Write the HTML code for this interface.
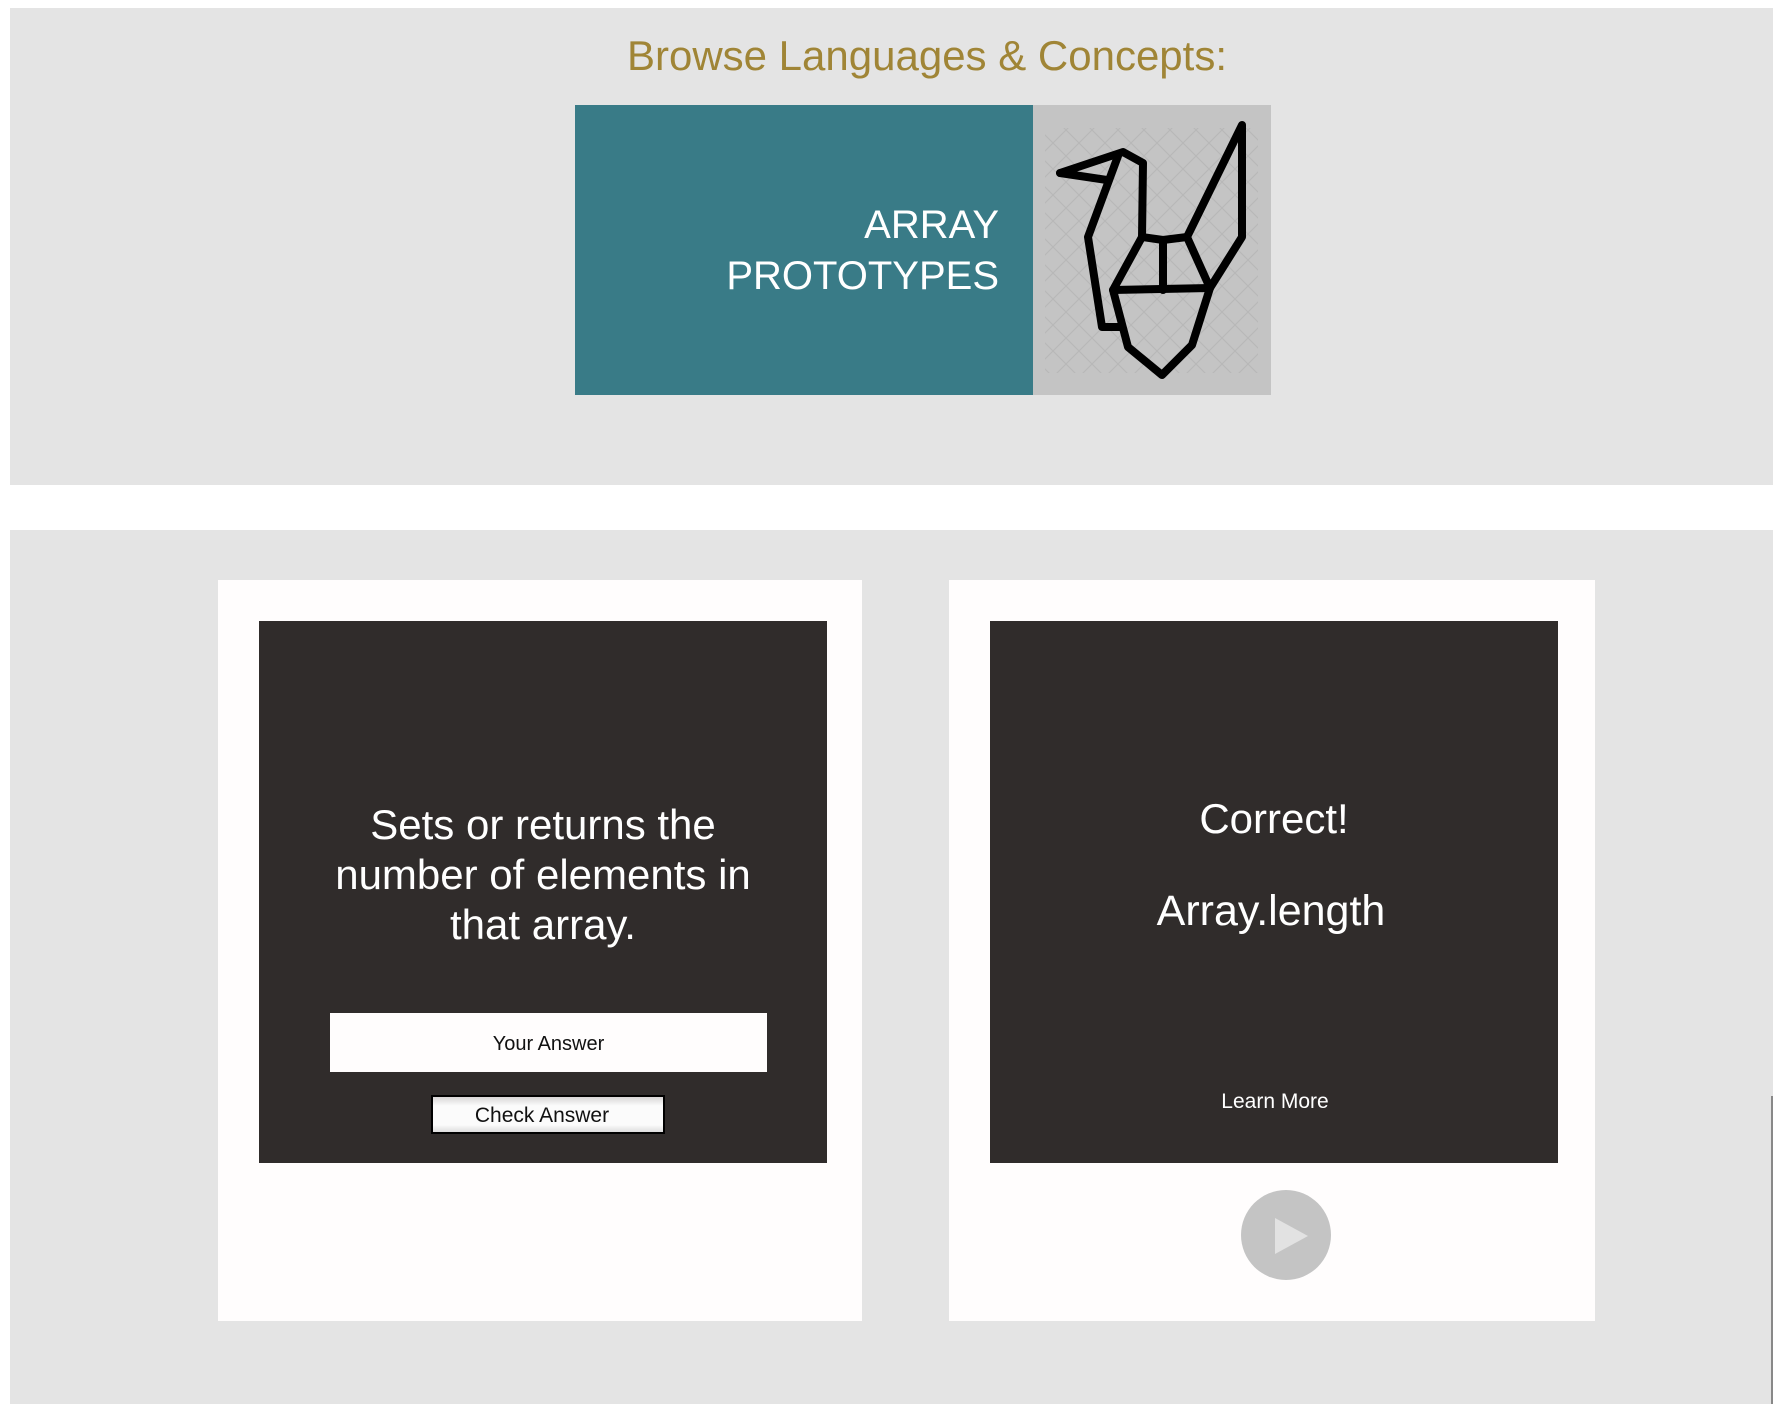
<!DOCTYPE html>
<html><head><style>
*{margin:0;padding:0;box-sizing:border-box}
body{width:1786px;height:1416px;background:#fff;position:relative;overflow:hidden;font-family:"Liberation Sans",sans-serif}
.a{position:absolute}
.t{position:absolute;white-space:nowrap;text-align:center}
</style></head><body>
<div class="a" style="left:10px;top:8px;width:1763px;height:477px;background:#e4e4e4"></div>
<div class="t" style="left:0;width:1854px;top:30px;font-size:42px;color:#a08536;line-height:52px">Browse Languages &amp; Concepts:</div>
<div class="a" style="left:575px;top:105px;width:458px;height:290px;background:#397b87"></div>
<div class="a" style="left:600px;top:200px;width:399px;text-align:right;color:#fff;font-size:40px;line-height:51px">ARRAY<br>PROTOTYPES</div>
<svg class="a" style="left:1033px;top:105px" width="238" height="290" viewBox="1033 105 238 290">
<defs><pattern id="p" width="26" height="26" patternUnits="userSpaceOnUse"><path d="M0 0L26 26M26 0L0 26" stroke="#b8b8b8" stroke-width="1.2"/></pattern></defs>
<rect x="1033" y="105" width="238" height="290" fill="#c4c4c4"/>
<rect x="1045" y="128" width="213" height="245" fill="url(#p)"/>
<g fill="none" stroke="#000" stroke-width="8" stroke-linejoin="round" stroke-linecap="round">
<path d="M1060 173L1123 152L1143 163L1142 237"/>
<path d="M1060 173L1107 180"/>
<path d="M1118 156L1088 237L1102 327L1120 327"/>
<path d="M1142 237L1163 240L1187 237L1210 288L1113 290Z"/>
<path d="M1163 240L1163 290"/>
<path d="M1187 237L1242 125L1242 237L1210 288"/>
<path d="M1113 290L1128 347L1162 375L1192 345L1210 288"/>
</g></svg>
<div class="a" style="left:10px;top:530px;width:1763px;height:874px;background:#e4e4e4"></div>
<div class="a" style="left:1771px;top:1096px;width:2px;height:308px;background:#888"></div>
<div class="a" style="left:218px;top:580px;width:644px;height:741px;background:#fffdfd"></div>
<div class="a" style="left:949px;top:580px;width:646px;height:741px;background:#fffdfd"></div>
<div class="a" style="left:259px;top:621px;width:568px;height:542px;background:#302c2b"></div>
<div class="a" style="left:990px;top:621px;width:568px;height:542px;background:#302c2b"></div>
<div class="t" style="left:259px;width:568px;top:800px;color:#fff;font-size:42px;line-height:50px">Sets or returns the<br>number of elements in<br>that array.</div>
<div class="a" style="left:330px;top:1013px;width:437px;height:59px;background:#fffdfd"></div>
<div class="t" style="left:330px;width:437px;top:1033px;font-size:20px;color:#111">Your Answer</div>
<div class="a" style="left:431px;top:1095px;width:234px;height:39px;background:linear-gradient(#d8d6d6,#fbfbfb 25%,#fbfbfb 80%,#ddd);border:2px solid #000"></div>
<div class="t" style="left:425px;width:234px;top:1104px;font-size:21px;color:#111">Check Answer</div>
<div class="t" style="left:990px;width:568px;top:794px;color:#fff;font-size:42px;line-height:50px">Correct!</div>
<div class="t" style="left:990px;width:562px;top:886px;color:#fff;font-size:43px;line-height:50px">Array.length</div>
<div class="t" style="left:990px;width:570px;top:1090px;color:#fff;font-size:21px">Learn More</div>
<svg class="a" style="left:1240px;top:1190px" width="92" height="92"><ellipse cx="46" cy="45" rx="45" ry="45" fill="#c4c4c4"/><path d="M35 28L68 46L35 64Z" fill="#e2e2e2"/></svg>
</body></html>
